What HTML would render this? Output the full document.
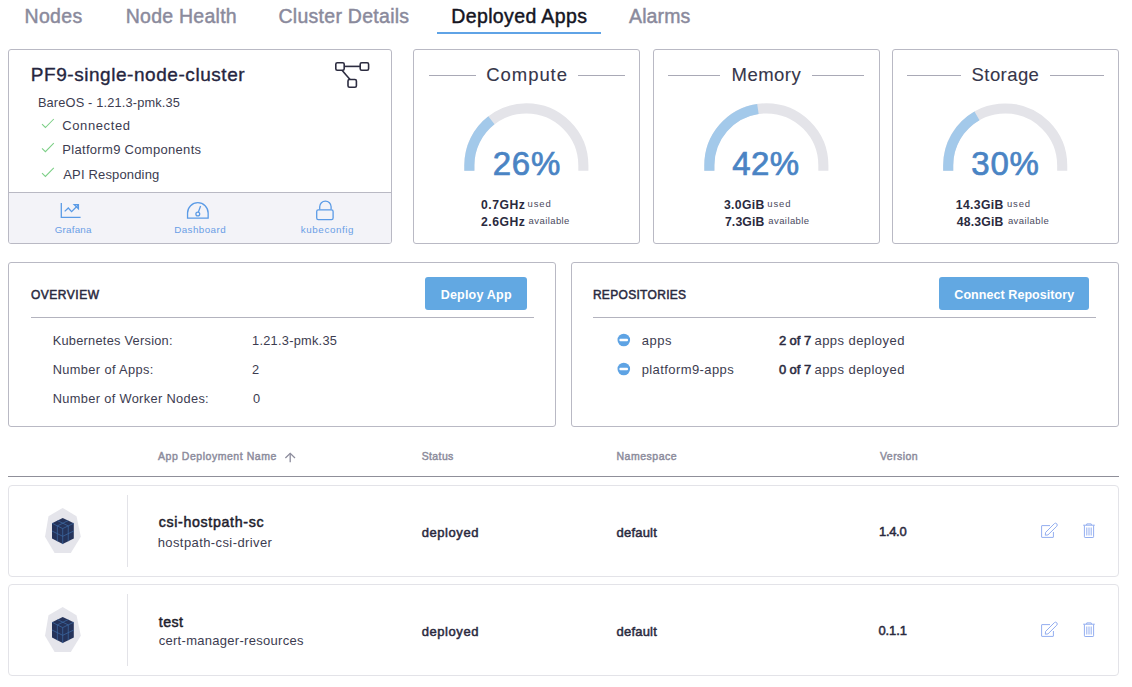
<!DOCTYPE html>
<html><head><meta charset="utf-8"><style>
html,body{margin:0;padding:0;background:#fff;width:1132px;height:687px;overflow:hidden;position:relative}
.t{position:absolute;white-space:nowrap;font-family:"Liberation Sans",sans-serif}
.b{position:absolute}
svg{position:absolute;left:0;top:0}
</style></head><body>
<div class="b" style="left:437px;top:32px;width:164px;height:2px;background:#5fa3e6"></div><div class="b" style="left:8px;top:49px;width:384px;height:195px;border:1px solid #b9b9c4;border-radius:3px;box-sizing:border-box"></div><div class="b" style="left:413px;top:49px;width:227px;height:195px;border:1px solid #b9b9c4;border-radius:3px;box-sizing:border-box"></div><div class="b" style="left:653px;top:49px;width:227px;height:195px;border:1px solid #b9b9c4;border-radius:3px;box-sizing:border-box"></div><div class="b" style="left:892px;top:49px;width:227px;height:195px;border:1px solid #b9b9c4;border-radius:3px;box-sizing:border-box"></div><div class="b" style="left:8px;top:262px;width:548px;height:165px;border:1px solid #b9b9c4;border-radius:3px;box-sizing:border-box"></div><div class="b" style="left:571px;top:262px;width:548px;height:165px;border:1px solid #b9b9c4;border-radius:3px;box-sizing:border-box"></div><div class="b" style="left:9px;top:192px;width:382px;height:51px;background:#f3f3f8;border-top:1px solid #b9b9c4;box-sizing:border-box;border-radius:0 0 2px 2px"></div><div class="b" style="left:429px;top:75px;width:47px;height:1px;background:#a9a9b6"></div><div class="b" style="left:578px;top:75px;width:47px;height:1px;background:#a9a9b6"></div><div class="b" style="left:668px;top:75px;width:52px;height:1px;background:#a9a9b6"></div><div class="b" style="left:812px;top:75px;width:52px;height:1px;background:#a9a9b6"></div><div class="b" style="left:907px;top:75px;width:54px;height:1px;background:#a9a9b6"></div><div class="b" style="left:1050px;top:75px;width:54px;height:1px;background:#a9a9b6"></div><div class="b" style="left:425px;top:277px;width:102px;height:33px;background:#62a8e2;border-radius:3px"></div><div class="b" style="left:939px;top:277px;width:150px;height:33px;background:#62a8e2;border-radius:3px"></div><div class="b" style="left:31px;top:317px;width:503px;height:1px;background:#b3b3be"></div><div class="b" style="left:593px;top:317px;width:503px;height:1px;background:#b3b3be"></div><div class="b" style="left:8px;top:476px;width:1111px;height:1px;background:#8f8f99"></div><div class="b" style="left:8px;top:485px;width:1111px;height:92px;border:1px solid #e3e3e8;border-radius:4px;box-sizing:border-box"></div><div class="b" style="left:127px;top:495px;width:1px;height:72px;background:#e3e3e8"></div><div class="b" style="left:8px;top:584px;width:1111px;height:92px;border:1px solid #e3e3e8;border-radius:4px;box-sizing:border-box"></div><div class="b" style="left:127px;top:594px;width:1px;height:72px;background:#e3e3e8"></div>
<svg width="1132" height="687" viewBox="0 0 1132 687"><g fill="none" stroke="#2c2c40" stroke-width="1.6"><rect x="335.8" y="62.8" width="8.4" height="7.4" rx="1.5"/><rect x="360.2" y="62.8" width="8.4" height="7.4" rx="1.5"/><rect x="348" y="79.5" width="8.4" height="7.8" rx="1.5"/><line x1="344.2" y1="66.4" x2="360.2" y2="66.4"/><line x1="342" y1="70.2" x2="350" y2="79.5"/></g><polyline points="42,124.19999999999999 45.4,127.49999999999999 53.8,118.99999999999999" fill="none" stroke="#7ccf86" stroke-width="1.05"/><polyline points="42,148.4 45.4,151.70000000000002 53.8,143.20000000000002" fill="none" stroke="#7ccf86" stroke-width="1.05"/><polyline points="42,173.1 45.4,176.4 53.8,167.9" fill="none" stroke="#7ccf86" stroke-width="1.05"/><g fill="none" stroke="#5b9be6" stroke-width="1.3"><polyline points="61.3,203 61.3,217.4 80.6,217.4"/><polyline points="64.7,211.4 68.3,208 71.6,211.6 78.2,205"/><polygon points="74.2,204.6 78.4,204.6 78.4,208.8"/></g><g fill="none" stroke="#5b9be6" stroke-width="1.3"><path d="M187.55,218.05 L187.55,212.95 A10.3,10.3 0 0 1 208.15,212.95 L208.15,218.05 Z"/><line x1="198.4" y1="212" x2="200.6" y2="206"/><circle cx="197.8" cy="214" r="1.9"/></g><g fill="none" stroke="#5b9be6" stroke-width="1.3"><path d="M319.7,209.6 L319.7,206.8 A5.7,5.7 0 0 1 331.1,206.8 L331.1,209.6"/><rect x="316.7" y="209.9" width="16.4" height="9.8" rx="1.6"/></g><path d="M469.35,170.8 L469.35,165.35 A57,57 0 0 1 583.35,165.35 L583.35,170.8" fill="none" stroke="#e4e4e9" stroke-width="10.1"/><path d="M469.35,170.8 L469.35,165.35 A57,57 0 0 1 491.41,120.31" fill="none" stroke="#a3c9ea" stroke-width="10.1"/><path d="M709.35,170.8 L709.35,165.35 A57,57 0 0 1 823.35,165.35 L823.35,170.8" fill="none" stroke="#e4e4e9" stroke-width="10.1"/><path d="M709.35,170.8 L709.35,165.35 A57,57 0 0 1 757.92,108.98" fill="none" stroke="#a3c9ea" stroke-width="10.1"/><path d="M948.2,170.8 L948.2,165.35 A57,57 0 0 1 1062.2,165.35 L1062.2,170.8" fill="none" stroke="#e4e4e9" stroke-width="10.1"/><path d="M948.2,170.8 L948.2,165.35 A57,57 0 0 1 976.96,115.84" fill="none" stroke="#a3c9ea" stroke-width="10.1"/><circle cx="623.8" cy="340" r="6.3" fill="#5ea3e4"/><rect x="619.4" y="338.7" width="8.6" height="2.6" rx="1" fill="#fff"/><circle cx="623.8" cy="369" r="6.3" fill="#5ea3e4"/><rect x="619.4" y="367.7" width="8.6" height="2.6" rx="1" fill="#fff"/><g fill="none" stroke="#8c8c9c" stroke-width="1.3"><line x1="290.2" y1="453.5" x2="290.2" y2="462.2"/><polyline points="285.4,458 290.2,453.3 295,458"/></g><polygon points="62.7,507.9 76.5,516.2 80.8,536.7 70.8,552.9 54.6,552.9 45,536.7 48.5,516.2" fill="#e5e5eb"/><polygon points="62.7,517.9 73.8,523.2 73.8,538.5 62.7,544.1 52,538.5 52,523.2" fill="#25335a"/><line x1="62.7" y1="528.6" x2="62.7" y2="544.1" stroke="#3d6ca6" stroke-width="0.7"/><line x1="52" y1="523.2" x2="62.7" y2="528.6" stroke="#3d6ca6" stroke-width="0.7"/><line x1="62.7" y1="528.6" x2="73.8" y2="523.2" stroke="#3d6ca6" stroke-width="0.7"/><line x1="57.35" y1="525.9" x2="57.35" y2="541.3" stroke="#3d6ca6" stroke-width="0.7"/><line x1="68.25" y1="525.9" x2="68.25" y2="541.3" stroke="#3d6ca6" stroke-width="0.7"/><line x1="52" y1="531" x2="62.7" y2="536.3" stroke="#3d6ca6" stroke-width="0.7"/><line x1="62.7" y1="536.3" x2="73.8" y2="531" stroke="#3d6ca6" stroke-width="0.7"/><line x1="57.35" y1="520.55" x2="68.25" y2="525.9" stroke="#3d6ca6" stroke-width="0.7"/><line x1="68.25" y1="520.55" x2="57.35" y2="525.9" stroke="#3d6ca6" stroke-width="0.7"/><polygon points="62.7,606.9 76.5,615.2 80.8,635.7 70.8,651.9 54.6,651.9 45,635.7 48.5,615.2" fill="#e5e5eb"/><polygon points="62.7,616.9 73.8,622.2 73.8,637.5 62.7,643.1 52,637.5 52,622.2" fill="#25335a"/><line x1="62.7" y1="627.6" x2="62.7" y2="643.1" stroke="#3d6ca6" stroke-width="0.7"/><line x1="52" y1="622.2" x2="62.7" y2="627.6" stroke="#3d6ca6" stroke-width="0.7"/><line x1="62.7" y1="627.6" x2="73.8" y2="622.2" stroke="#3d6ca6" stroke-width="0.7"/><line x1="57.35" y1="624.9" x2="57.35" y2="640.3" stroke="#3d6ca6" stroke-width="0.7"/><line x1="68.25" y1="624.9" x2="68.25" y2="640.3" stroke="#3d6ca6" stroke-width="0.7"/><line x1="52" y1="630" x2="62.7" y2="635.3" stroke="#3d6ca6" stroke-width="0.7"/><line x1="62.7" y1="635.3" x2="73.8" y2="630" stroke="#3d6ca6" stroke-width="0.7"/><line x1="57.35" y1="619.55" x2="68.25" y2="624.9" stroke="#3d6ca6" stroke-width="0.7"/><line x1="68.25" y1="619.55" x2="57.35" y2="624.9" stroke="#3d6ca6" stroke-width="0.7"/><g fill="none" stroke="#93aef0" stroke-width="1"><path d="M1050,525.6 L1042,525.6 Q1041.6,525.6 1041.6,526 L1041.6,537 Q1041.6,537.4 1042,537.4 L1053,537.4 Q1053.4,537.4 1053.4,537 L1053.4,532"/><path d="M1045.3,535.2 L1045.6,532.4 L1054.4,523.6 Q1055.6,522.6 1056.8,523.8 Q1057.8,525 1056.8,526.2 L1048,534.9 Z"/></g><g fill="none" stroke="#93aef0" stroke-width="1"><line x1="1083.2" y1="525.2" x2="1094.8" y2="525.2"/><path d="M1086.5,525.2 L1086.8,523.9 L1091.2,523.9 L1091.5,525.2"/><path d="M1084.4,525.4 L1084.4,536.8 Q1084.4,537.5 1085.1,537.5 L1092.9,537.5 Q1093.6,537.5 1093.6,536.8 L1093.6,525.4"/><line x1="1086.8" y1="527.5" x2="1086.8" y2="535.5"/><line x1="1089" y1="527.5" x2="1089" y2="535.5"/><line x1="1091.2" y1="527.5" x2="1091.2" y2="535.5"/></g><g fill="none" stroke="#93aef0" stroke-width="1"><path d="M1050,624.6 L1042,624.6 Q1041.6,624.6 1041.6,625 L1041.6,636 Q1041.6,636.4 1042,636.4 L1053,636.4 Q1053.4,636.4 1053.4,636 L1053.4,631"/><path d="M1045.3,634.2 L1045.6,631.4 L1054.4,622.6 Q1055.6,621.6 1056.8,622.8 Q1057.8,624 1056.8,625.2 L1048,633.9 Z"/></g><g fill="none" stroke="#93aef0" stroke-width="1"><line x1="1083.2" y1="624.2" x2="1094.8" y2="624.2"/><path d="M1086.5,624.2 L1086.8,622.9 L1091.2,622.9 L1091.5,624.2"/><path d="M1084.4,624.4 L1084.4,635.8 Q1084.4,636.5 1085.1,636.5 L1092.9,636.5 Q1093.6,636.5 1093.6,635.8 L1093.6,624.4"/><line x1="1086.8" y1="626.5" x2="1086.8" y2="634.5"/><line x1="1089" y1="626.5" x2="1089" y2="634.5"/><line x1="1091.2" y1="626.5" x2="1091.2" y2="634.5"/></g></svg>
<div class="t" style="left:24.60px;top:7.00px;font-size:19.5px;line-height:19.5px;font-weight:400;letter-spacing:0.3px;color:#8a8a9c;-webkit-text-stroke:0.45px #8a8a9c">Nodes</div>
<div class="t" style="left:125.70px;top:7.00px;font-size:19.5px;line-height:19.5px;font-weight:400;letter-spacing:0.26px;color:#8a8a9c;-webkit-text-stroke:0.45px #8a8a9c">Node Health</div>
<div class="t" style="left:278.50px;top:7.00px;font-size:19.5px;line-height:19.5px;font-weight:400;letter-spacing:0.271px;color:#8a8a9c;-webkit-text-stroke:0.45px #8a8a9c">Cluster Details</div>
<div class="t" style="left:451.30px;top:7.00px;font-size:19.5px;line-height:19.5px;font-weight:400;letter-spacing:0.367px;color:#15151f;-webkit-text-stroke:0.45px #15151f">Deployed Apps</div>
<div class="t" style="left:629.00px;top:7.00px;font-size:19.5px;line-height:19.5px;font-weight:400;letter-spacing:0.14px;color:#8a8a9c;-webkit-text-stroke:0.45px #8a8a9c">Alarms</div>
<div class="t" style="left:30.80px;top:65.00px;font-size:19px;line-height:19px;font-weight:400;letter-spacing:0.55px;color:#262640;-webkit-text-stroke:0.35px #262640">PF9-single-node-cluster</div>
<div class="t" style="left:37.90px;top:97.00px;font-size:12.8px;line-height:12.8px;font-weight:400;letter-spacing:0.157px;color:#3c3c50">BareOS - 1.21.3-pmk.35</div>
<div class="t" style="left:62.30px;top:119.00px;font-size:13px;line-height:13px;font-weight:400;letter-spacing:0.6px;color:#3c3c50">Connected</div>
<div class="t" style="left:62.30px;top:143.00px;font-size:13px;line-height:13px;font-weight:400;letter-spacing:0.305px;color:#3c3c50">Platform9 Components</div>
<div class="t" style="left:63.30px;top:168.00px;font-size:13px;line-height:13px;font-weight:400;letter-spacing:0.154px;color:#3c3c50">API Responding</div>
<div class="t" style="left:54.80px;top:225.00px;font-size:9.8px;line-height:9.8px;font-weight:400;letter-spacing:0.2px;color:#6a9ee6">Grafana</div>
<div class="t" style="left:174.20px;top:225.00px;font-size:9.8px;line-height:9.8px;font-weight:400;letter-spacing:0.438px;color:#6a9ee6">Dashboard</div>
<div class="t" style="left:300.70px;top:225.00px;font-size:9.8px;line-height:9.8px;font-weight:400;letter-spacing:0.611px;color:#6a9ee6">kubeconfig</div>
<div class="t" style="left:486.30px;top:66.00px;font-size:18.5px;line-height:18.5px;font-weight:400;letter-spacing:0.933px;color:#36364a;-webkit-text-stroke:0.1px #36364a">Compute</div>
<div class="t" style="left:492.70px;top:147.00px;font-size:33px;line-height:33px;font-weight:400;letter-spacing:0.8px;color:#4a84c4;-webkit-text-stroke:0.7px #4a84c4">26%</div>
<div class="t" style="left:481.00px;top:199.00px;font-size:12.2px;line-height:12.2px;font-weight:700;letter-spacing:0.5px;color:#2a2a3e">0.7GHz</div>
<div class="t" style="left:527.60px;top:199.00px;font-size:9.5px;line-height:9.5px;font-weight:400;letter-spacing:0.867px;color:#4a4a5e">used</div>
<div class="t" style="left:481.00px;top:216.00px;font-size:12.2px;line-height:12.2px;font-weight:700;letter-spacing:0.5px;color:#2a2a3e">2.6GHz</div>
<div class="t" style="left:528.60px;top:216.00px;font-size:9.5px;line-height:9.5px;font-weight:400;letter-spacing:0.413px;color:#4a4a5e">available</div>
<div class="t" style="left:731.60px;top:66.00px;font-size:18.5px;line-height:18.5px;font-weight:400;letter-spacing:0.46px;color:#36364a;-webkit-text-stroke:0.1px #36364a">Memory</div>
<div class="t" style="left:732.30px;top:147.00px;font-size:33px;line-height:33px;font-weight:400;letter-spacing:0.4px;color:#4a84c4;-webkit-text-stroke:0.7px #4a84c4">42%</div>
<div class="t" style="left:723.90px;top:199.00px;font-size:12.2px;line-height:12.2px;font-weight:700;letter-spacing:0.38px;color:#2a2a3e">3.0GiB</div>
<div class="t" style="left:767.30px;top:199.00px;font-size:9.5px;line-height:9.5px;font-weight:400;letter-spacing:0.867px;color:#4a4a5e">used</div>
<div class="t" style="left:724.90px;top:216.00px;font-size:12.2px;line-height:12.2px;font-weight:700;letter-spacing:0.18px;color:#2a2a3e">7.3GiB</div>
<div class="t" style="left:768.30px;top:216.00px;font-size:9.5px;line-height:9.5px;font-weight:400;letter-spacing:0.413px;color:#4a4a5e">available</div>
<div class="t" style="left:971.60px;top:66.00px;font-size:18.5px;line-height:18.5px;font-weight:400;letter-spacing:0.417px;color:#36364a;-webkit-text-stroke:0.1px #36364a">Storage</div>
<div class="t" style="left:971.30px;top:147.00px;font-size:33px;line-height:33px;font-weight:400;letter-spacing:0.8px;color:#4a84c4;-webkit-text-stroke:0.7px #4a84c4">30%</div>
<div class="t" style="left:955.80px;top:199.00px;font-size:12.2px;line-height:12.2px;font-weight:700;letter-spacing:0.367px;color:#2a2a3e">14.3GiB</div>
<div class="t" style="left:1006.90px;top:199.00px;font-size:9.5px;line-height:9.5px;font-weight:400;letter-spacing:0.867px;color:#4a4a5e">used</div>
<div class="t" style="left:956.80px;top:216.00px;font-size:12.2px;line-height:12.2px;font-weight:700;letter-spacing:0.2px;color:#2a2a3e">48.3GiB</div>
<div class="t" style="left:1007.90px;top:216.00px;font-size:9.5px;line-height:9.5px;font-weight:400;letter-spacing:0.413px;color:#4a4a5e">available</div>
<div class="t" style="left:30.90px;top:289.00px;font-size:12px;line-height:12px;font-weight:400;letter-spacing:0.529px;color:#2a2a3e;-webkit-text-stroke:0.5px #2a2a3e">OVERVIEW</div>
<div class="t" style="left:440.70px;top:289.00px;font-size:12.5px;line-height:12.5px;font-weight:700;letter-spacing:0.211px;color:#ffffff">Deploy App</div>
<div class="t" style="left:52.70px;top:335.00px;font-size:12.8px;line-height:12.8px;font-weight:400;letter-spacing:0.256px;color:#3c3c50">Kubernetes Version:</div>
<div class="t" style="left:52.70px;top:364.00px;font-size:12.8px;line-height:12.8px;font-weight:400;letter-spacing:0.379px;color:#3c3c50">Number of Apps:</div>
<div class="t" style="left:52.70px;top:393.00px;font-size:12.8px;line-height:12.8px;font-weight:400;letter-spacing:0.345px;color:#3c3c50">Number of Worker Nodes:</div>
<div class="t" style="left:252.00px;top:335.00px;font-size:12.8px;line-height:12.8px;font-weight:400;letter-spacing:0.258px;color:#3c3c50">1.21.3-pmk.35</div>
<div class="t" style="left:252.00px;top:364.00px;font-size:12.8px;line-height:12.8px;font-weight:400;letter-spacing:0.0px;color:#3c3c50">2</div>
<div class="t" style="left:253.00px;top:393.00px;font-size:12.8px;line-height:12.8px;font-weight:400;letter-spacing:0.0px;color:#3c3c50">0</div>
<div class="t" style="left:592.90px;top:289.00px;font-size:12px;line-height:12px;font-weight:400;letter-spacing:0.309px;color:#2a2a3e;-webkit-text-stroke:0.5px #2a2a3e">REPOSITORIES</div>
<div class="t" style="left:954.30px;top:289.00px;font-size:12.5px;line-height:12.5px;font-weight:700;letter-spacing:0.065px;color:#ffffff">Connect Repository</div>
<div class="t" style="left:641.70px;top:334.00px;font-size:13px;line-height:13px;font-weight:400;letter-spacing:0.5px;color:#3c3c50">apps</div>
<div class="t" style="left:641.70px;top:363.00px;font-size:13px;line-height:13px;font-weight:400;letter-spacing:0.408px;color:#3c3c50">platform9-apps</div>
<div class="t" style="left:778.90px;top:334.00px;font-size:13px;line-height:13px;font-weight:400;letter-spacing:-0.06px;color:#2a2a3e;-webkit-text-stroke:0.55px #2a2a3e">2 of 7</div>
<div class="t" style="left:814.50px;top:334.00px;font-size:13px;line-height:13px;font-weight:400;letter-spacing:0.442px;color:#3c3c50">apps deployed</div>
<div class="t" style="left:778.90px;top:363.00px;font-size:13px;line-height:13px;font-weight:400;letter-spacing:-0.06px;color:#2a2a3e;-webkit-text-stroke:0.55px #2a2a3e">0 of 7</div>
<div class="t" style="left:814.50px;top:363.00px;font-size:13px;line-height:13px;font-weight:400;letter-spacing:0.442px;color:#3c3c50">apps deployed</div>
<div class="t" style="left:158.00px;top:451.00px;font-size:10.5px;line-height:10.5px;font-weight:400;letter-spacing:0.539px;color:#8c8c9c;-webkit-text-stroke:0.45px #8c8c9c">App Deployment Name</div>
<div class="t" style="left:421.70px;top:451.00px;font-size:10.5px;line-height:10.5px;font-weight:400;letter-spacing:0.38px;color:#8c8c9c;-webkit-text-stroke:0.45px #8c8c9c">Status</div>
<div class="t" style="left:616.50px;top:451.00px;font-size:10.5px;line-height:10.5px;font-weight:400;letter-spacing:0.513px;color:#8c8c9c;-webkit-text-stroke:0.45px #8c8c9c">Namespace</div>
<div class="t" style="left:880.00px;top:451.00px;font-size:10.5px;line-height:10.5px;font-weight:400;letter-spacing:0.433px;color:#8c8c9c;-webkit-text-stroke:0.45px #8c8c9c">Version</div>
<div class="t" style="left:158.70px;top:515.00px;font-size:14.2px;line-height:14.2px;font-weight:400;letter-spacing:0.671px;color:#1e1e2e;-webkit-text-stroke:0.5px #1e1e2e">csi-hostpath-sc</div>
<div class="t" style="left:157.70px;top:536.00px;font-size:13px;line-height:13px;font-weight:400;letter-spacing:0.406px;color:#3c3c50">hostpath-csi-driver</div>
<div class="t" style="left:421.70px;top:526.00px;font-size:13px;line-height:13px;font-weight:400;letter-spacing:0.571px;color:#2a2a3e;-webkit-text-stroke:0.5px #2a2a3e">deployed</div>
<div class="t" style="left:616.50px;top:526.00px;font-size:13px;line-height:13px;font-weight:400;letter-spacing:0.217px;color:#2a2a3e;-webkit-text-stroke:0.5px #2a2a3e">default</div>
<div class="t" style="left:879.00px;top:525.00px;font-size:13px;line-height:13px;font-weight:400;letter-spacing:-0.325px;color:#2a2a3e;-webkit-text-stroke:0.5px #2a2a3e">1.4.0</div>
<div class="t" style="left:158.70px;top:615.00px;font-size:14.2px;line-height:14.2px;font-weight:400;letter-spacing:0.5px;color:#1e1e2e;-webkit-text-stroke:0.5px #1e1e2e">test</div>
<div class="t" style="left:158.70px;top:634.00px;font-size:13px;line-height:13px;font-weight:400;letter-spacing:0.29px;color:#3c3c50">cert-manager-resources</div>
<div class="t" style="left:421.70px;top:625.00px;font-size:13px;line-height:13px;font-weight:400;letter-spacing:0.571px;color:#2a2a3e;-webkit-text-stroke:0.5px #2a2a3e">deployed</div>
<div class="t" style="left:616.50px;top:625.00px;font-size:13px;line-height:13px;font-weight:400;letter-spacing:0.217px;color:#2a2a3e;-webkit-text-stroke:0.5px #2a2a3e">default</div>
<div class="t" style="left:878.50px;top:624.00px;font-size:13px;line-height:13px;font-weight:400;letter-spacing:-0.125px;color:#2a2a3e;-webkit-text-stroke:0.5px #2a2a3e">0.1.1</div>
</body></html>
